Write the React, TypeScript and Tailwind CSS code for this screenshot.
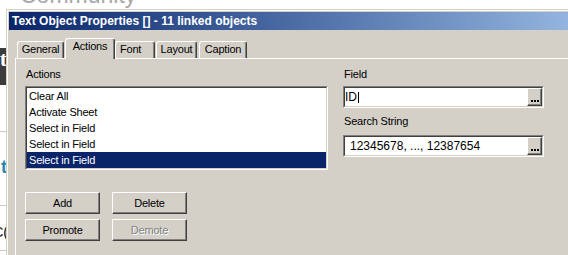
import React from "react";

const FONT = "font-['Liberation_Sans',Arial,sans-serif]";

function Btn({ children, disabled }: { children: React.ReactNode; disabled?: boolean }) {
  return (
    <div className="h-[22px] w-[75px] border border-t-white border-l-white border-r-[#404040] border-b-[#404040] shadow-[inset_-1px_-1px_0_#808080] flex items-center justify-center text-[11px] leading-[13px] tracking-[-0.2px]">
      <span className={disabled ? "text-[#808080] [text-shadow:1px_1px_0_#ffffff]" : "text-black"}>{children}</span>
    </div>
  );
}

function Tab({ label, selected, className }: { label: string; selected?: boolean; className: string }) {
  return (
    <div
      className={
        "border-t border-l border-white border-r border-r-[#404040] shadow-[inset_-1px_0_0_#808080] rounded-t-[3px] bg-[#d4d0c8] text-[11px] leading-[13px] tracking-[-0.2px] pt-[1px] text-black " +
        (selected ? "h-[21px] -mb-[1px] relative z-10 " : "h-[17px] ") +
        className
      }
    >
      {label}
    </div>
  );
}

function Sunken({ children, className }: { children: React.ReactNode; className: string }) {
  return (
    <div className={"border border-t-[#808080] border-l-[#808080] border-r-white border-b-white " + className}>
      <div className="h-full border border-t-[#404040] border-l-[#404040] border-r-[#d4d0c8] border-b-[#d4d0c8] bg-white">
        {children}
      </div>
    </div>
  );
}

function DotsButton() {
  return (
    <div className="h-full w-[15px] border border-t-white border-l-white border-r-[#404040] border-b-[#404040] shadow-[inset_-1px_-1px_0_#808080] bg-[#d4d0c8] flex items-end justify-center pb-[3px]">
      <div className="flex gap-[1px]">
        <div className="w-[2px] h-[2px] bg-black" />
        <div className="w-[2px] h-[2px] bg-black" />
        <div className="w-[2px] h-[2px] bg-black" />
      </div>
    </div>
  );
}

export default function App() {
  const items = ["Clear All", "Activate Sheet", "Select in Field", "Select in Field", "Select in Field"];
  return (
    <div className={"w-[568px] h-[255px] overflow-hidden bg-white " + FONT}>
      <div className="h-[9px] overflow-hidden pl-[20px]">
        <div className="text-[23px] leading-[23px] -mt-[16px] text-[#a8a8a8]">Community</div>
      </div>
      <div className="flex">
        {/* background page strip */}
        <div className="w-[6px] shrink-0 flex flex-col overflow-hidden">
          <div className="h-[39px]" />
          <div className="h-[37px] bg-[#3c3c3c] flex justify-end overflow-hidden">
            <span className="text-white font-bold text-[22px] leading-[22px] font-['Liberation_Serif',serif] -mr-[1px]">t</span>
          </div>
          <div className="h-[46px]" />
          <div className="h-[1px] bg-[#c8c8c8]" />
          <div className="h-[26px]" />
          <div className="h-[18px] flex justify-end overflow-hidden">
            <span className="text-[#2a86b0] font-bold text-[18px] leading-[18px] -mr-[1px]">t</span>
          </div>
          <div className="h-[29px]" />
          <div className="h-[1px] bg-[#c8c8c8]" />
          <div className="h-[19px]" />
          <div className="h-[14px] flex justify-end overflow-hidden">
            <span className="text-black text-[14px] leading-[14px] -mr-[2px]">C(</span>
          </div>
          <div className="h-[11px]" />
          <div className="h-[1px] bg-[#c8c8c8]" />
        </div>

        {/* dialog */}
        <div className="w-[640px] shrink-0 border border-[#d4d0c8]">
          <div className="border-l border-t border-white p-[1px] bg-[#d4d0c8]">
            <div className="h-[18px] bg-gradient-to-r from-[#0a246a] to-[#a8c9ee] pl-[3px] text-white font-bold text-[12px] leading-[18px] whitespace-nowrap">
              Text Object Properties [] - 11 linked objects
            </div>
            <div className="bg-[#d4d0c8] pt-[8px] pl-[6px] h-[260px] flex flex-col">
              <div className="h-[20px] flex items-end pl-[2px]">
                <Tab label="General" className="w-[47px] text-center" />
                <Tab label="Actions" selected className="w-[50px] ml-[1px] text-center" />
                <Tab label="Font" className="w-[40px] pl-[4px]" />
                <Tab label="Layout" className="w-[41px] ml-[1px] text-center" />
                <Tab label="Caption" className="w-[48px] ml-[2px] text-center" />
              </div>
              <div className="flex-1 border-l border-t border-white flex pl-[9px] text-[11px] tracking-[-0.2px] text-black">
                <div className="w-[303px] flex flex-col">
                  <div className="mt-[9px] h-[13px] leading-[13px] pl-[1px]">Actions</div>
                  <Sunken className="mt-[5px] h-[84px]">
                    <div className="flex flex-col">
                      {items.map((t, i) => (
                        <div
                          key={i}
                          className={
                            "h-[16px] leading-[16px] pl-[2px] " +
                            (i === 4 ? "bg-[#0a246a] text-white" : "text-black")
                          }
                        >
                          {t}
                        </div>
                      ))}
                    </div>
                  </Sunken>
                  <div className="mt-[22px] grid grid-cols-[75px_75px] gap-x-[12px] gap-y-[5px]">
                    <Btn>Add</Btn>
                    <Btn>Delete</Btn>
                    <Btn>Promote</Btn>
                    <Btn disabled>Demote</Btn>
                  </div>
                </div>
                <div className="w-[201px] ml-[15px] flex flex-col">
                  <div className="mt-[9px] h-[13px] leading-[13px] pl-[1px]">Field</div>
                  <Sunken className="mt-[5px] h-[22px]">
                    <div className="h-full flex items-center tracking-normal">
                      <div className="flex-1 flex items-center text-[12px] leading-[14px]">
                        <span>ID</span>
                        <span className="inline-block w-[1px] h-[11px] bg-black ml-[1px]" />
                      </div>
                      <DotsButton />
                    </div>
                  </Sunken>
                  <div className="mt-[7px] h-[13px] leading-[13px] pl-[1px]">Search String</div>
                  <Sunken className="mt-[7px] h-[22px]">
                    <div className="h-full flex items-center tracking-normal">
                      <div className="flex-1 text-[12px] leading-[14px] pl-[5px] whitespace-nowrap">12345678, ..., 12387654</div>
                      <DotsButton />
                    </div>
                  </Sunken>
                </div>
              </div>
            </div>
          </div>
        </div>
      </div>
    </div>
  );
}
